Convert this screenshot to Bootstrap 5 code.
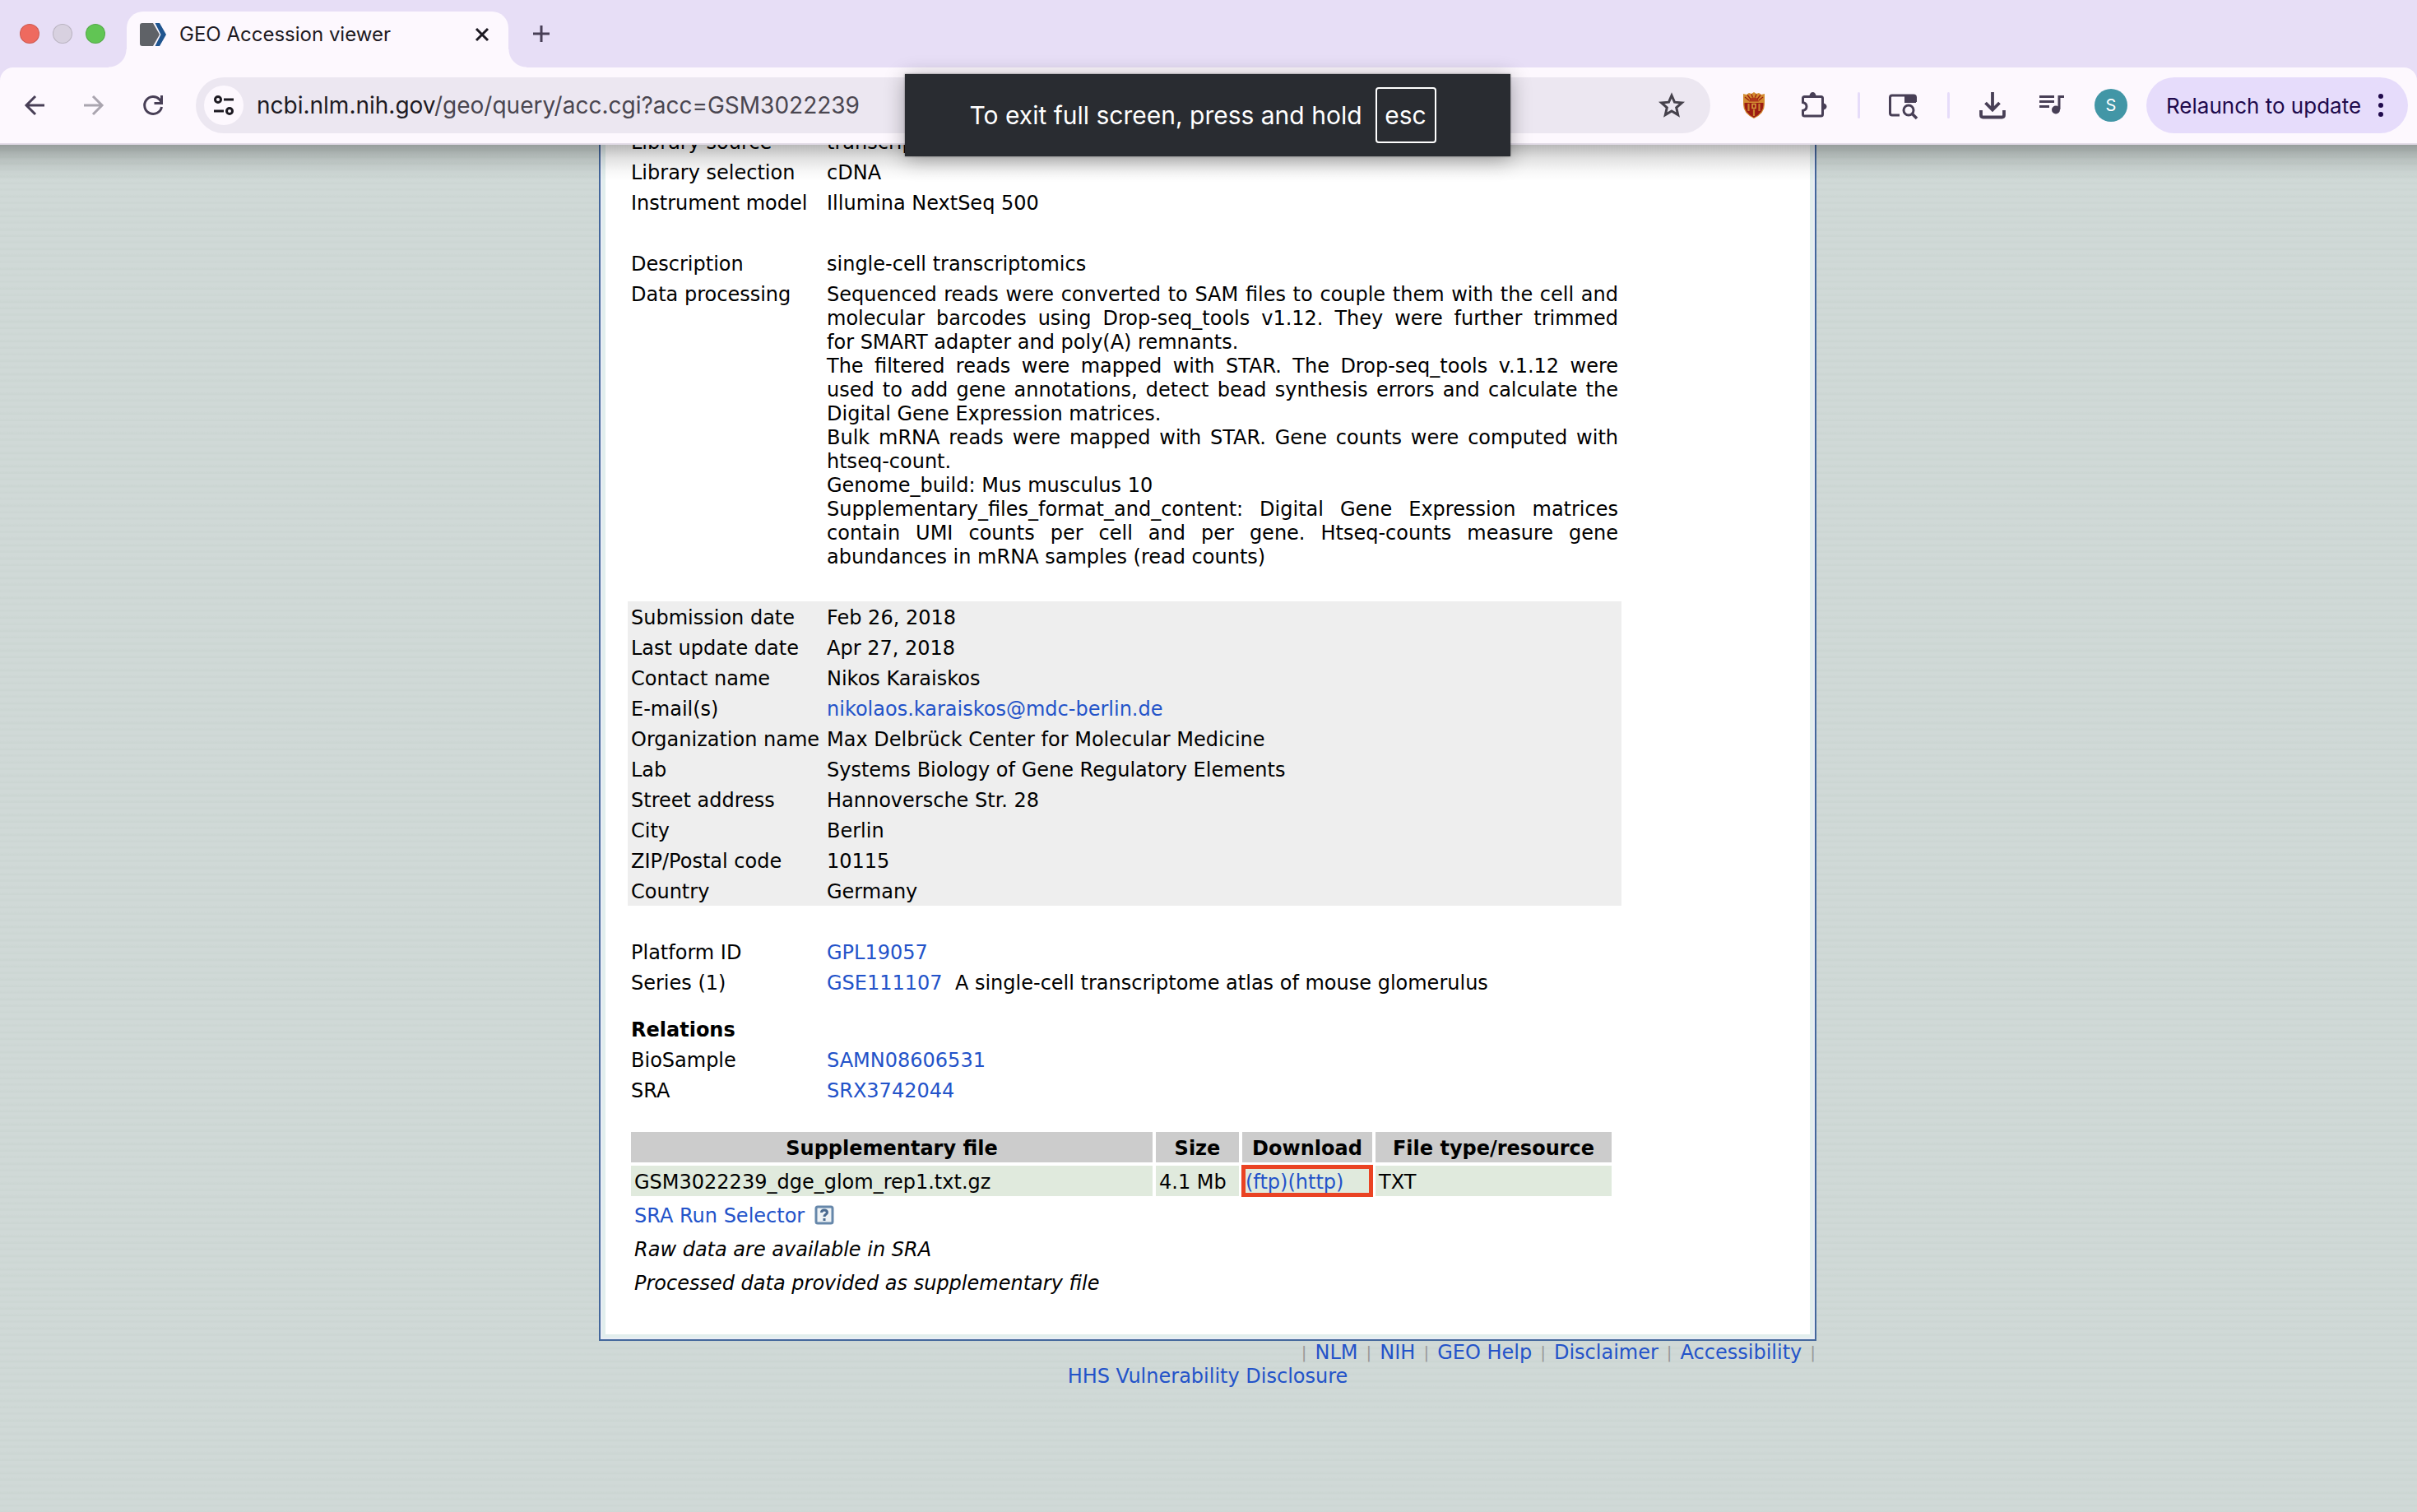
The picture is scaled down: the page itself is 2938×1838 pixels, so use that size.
<!DOCTYPE html>
<html lang="en">
<head>
<meta charset="utf-8">
<meta name="viewport" content="width=device-width, initial-scale=1">
<title>GEO Accession viewer</title>
<link href="https://cdn.jsdelivr.net/npm/bootstrap@5.3.0/dist/css/bootstrap.min.css" rel="stylesheet">
<style>
  body { font-family: "DejaVu Sans", Verdana, sans-serif; font-size: 24px; line-height: 29px; color: #000;
    background: repeating-linear-gradient(#d0d9d7 0 4px, #ccd6d3 7px 8px); }
  a { color: #2353c9; text-decoration: none; }
  svg { display: block; flex: none; }
  .chrome-ui { font-family: Inter, Roboto, sans-serif; background: #e7def6; color: #1d1a22; }
  .chrome-ui button, .notice { font-family: inherit; }
  .plain-btn { border: 0; background: none; padding: 0; color: #483f56; display: flex; align-items: center; justify-content: center; }
  .tool-btn { width: 40px; height: 40px; flex: none; }
  .tabstrip { height: 82px; padding-left: 24px; }
  .lights { gap: 16px; }
  .light { width: 24px; height: 24px; border-radius: 50%; border: 1px solid rgba(0,0,0,.14); }
  .light-close { background: #ee6a5f; }
  .light-min { background: #d8d1e0; }
  .light-max { background: #61c554; }
  .tab-item { width: 464px; height: 68px; margin-left: 26px; padding: 0 20px 12px 16px; background: #fdf8fe; border-radius: 20px 20px 0 0; position: relative; font-size: 24px; line-height: 28px; }
  .tab-item::before, .tab-item::after { content: ""; position: absolute; bottom: 0; width: 22px; height: 22px; }
  .tab-item::before { right: 100%; background: radial-gradient(circle at 0 0, transparent 21px, #fdf8fe 22px); }
  .tab-item::after { left: 100%; background: radial-gradient(circle at 100% 0, transparent 21px, #fdf8fe 22px); }
  .toolbar { height: 94px; padding: 0 11px 0 22px; background: #fdf8fe; border-bottom: 2px solid #e3dce8; border-radius: 16px 16px 0 0; }
  .nav-group { gap: 32px; }
  .omnibox { height: 68px; margin-left: 32px; padding: 0 28px 0 10px; border-radius: 34px; background: #ece7f1; }
  .chip { width: 48px; height: 48px; border-radius: 50%; background: #fdf8fe; }
  .url { margin-left: 16px; font-size: 28px; line-height: 36px; }
  .url-path { color: #4a4650; }
  .ext-group { gap: 33px; margin: 0 23px 0 33px; }
  .end-group { gap: 30px; }
  .bar-sep { width: 3px; height: 32px; border-radius: 2px; background: #e6dcfa; }
  .avatar { width: 40px; height: 40px; border-radius: 50%; background: #4296a6; color: #fff; font-size: 20px; }
  .relaunch { width: 318px; height: 68px; border-radius: 34px; background: #e6dcfb; color: #200a4c; font-size: 26px; padding: 0 28px 0 24px; flex: none; justify-content: space-between; }
  .notice { position: absolute; z-index: 5; top: 90px; left: 50%; margin-left: -369px; width: 736px; height: 100px; background: #292c31; color: #fff; font-size: 30px; line-height: 36px; gap: 16px; padding-right: 12px; box-shadow: 0 4px 24px rgba(0,0,0,.32), 0 0 2px rgba(0,0,0,.5); }
  .esc-key { font: inherit; color: #fff; background: none; border: 2px solid #fff; border-radius: 4px; width: 74px; height: 68px; padding: 0; display: flex; align-items: center; justify-content: center; }
  .viewport-area { position: relative; overflow: hidden; padding-right: 2px; }
  .viewport-area::before { content: ""; position: absolute; z-index: 2; top: 0; left: 0; right: 0; height: 44px; background: linear-gradient(rgba(0,0,0,.28), rgba(0,0,0,.12) 16px, rgba(0,0,0,.03) 32px, transparent); pointer-events: none; }
  .geo-frame { width: 1480px; max-width: 100%; margin: -23px auto 0; background: #fff; border: 2px solid #44679c; border-top: 0; box-shadow: inset 0 0 0 2px #e9edf5, inset 0 0 0 6px #e2eeed; padding: 0 6px 47px 33px; }
  .meta { width: 1208px; max-width: 100%; table-layout: fixed; border-collapse: collapse; }
  .meta th, .meta td { padding: 6px 4px 2px; height: 37px; vertical-align: top; text-align: left; font-weight: 400; }
  .meta th { width: 238px; white-space: nowrap; }
  .meta .just { text-align: justify; }
  .meta .grey { background: #eee; }
  .meta .half td { height: 20px; padding: 0; }
  .files { width: 1200px; max-width: 100%; margin: 29px 0 0 0; border-collapse: separate; border-spacing: 4px; table-layout: fixed; }
  .files th, .files td { padding: 6px 4px 2px; height: 37px; white-space: nowrap; }
  .files th { background: #ccc; text-align: center; }
  .files .data td { background: #e0eadd; }
  .files .mark-cell { box-shadow: inset 0 0 0 4px #ea4323, 0 0 0 1px #ea4323; }
  .c1 { width: 634px; } .c2 { width: 101px; } .c3 { width: 158px; }
  .help-link { margin: 0 0 4px 12px; }
  .foot { width: 1480px; max-width: 100%; margin: 0 auto; padding-right: 1px; }
  .foot-sep { font-size: 20px; color: #999; margin: 0 10px; }
  .foot-sep:last-child { margin-right: 0; }
</style>
<script src="https://cdn.jsdelivr.net/npm/bootstrap@5.3.0/dist/js/bootstrap.bundle.min.js"></script>
</head>
<body>
<header class="chrome-ui">
  <div class="tabstrip d-flex align-items-end">
    <div class="lights d-flex align-self-center">
      <span class="light light-close"></span><span class="light light-min"></span><span class="light light-max"></span>
    </div>
    <div class="tab-item d-flex align-items-center">
      <svg width="32" height="28" viewBox="0 0 32 28"><path d="M3 0h13l8 14-8 14H3a3 3 0 0 1-3-3V3a3 3 0 0 1 3-3z" fill="#5f6267"/><path d="M18.500 0H24l8 14-8 14h-5.500l7-14z" fill="#20558f"/></svg>
      <span class="ms-3">GEO Accession viewer</span>
      <button class="plain-btn ms-auto" aria-label="Close tab"><svg width="24" height="24" viewBox="0 0 24 24" stroke="#1d1a22" stroke-width="3"><path d="M5 5l14 14M19 5L5 19"/></svg></button>
    </div>
    <button class="plain-btn align-self-center ms-4" aria-label="New tab"><svg width="32" height="32" viewBox="0 0 32 32" stroke="#483f56" stroke-width="3"><path d="M16 6v20M6 16h20"/></svg></button>
  </div>
  <div class="toolbar d-flex align-items-center">
    <nav class="nav-group d-flex">
      <button class="plain-btn tool-btn" aria-label="Back"><svg width="40" height="40" viewBox="0 0 40 40" fill="none" stroke="#483f56" stroke-width="3"><path d="M32 20H10M21 9L10 20l11 11"/></svg></button>
      <button class="plain-btn tool-btn" aria-label="Forward"><svg width="40" height="40" viewBox="0 0 40 40" fill="none" stroke="#aaa5af" stroke-width="3"><path d="M8 20h22M19 9l11 11-11 11"/></svg></button>
      <button class="plain-btn tool-btn" aria-label="Reload"><svg width="40" height="40" viewBox="0 0 40 40" fill="none" stroke="#483f56" stroke-width="3"><path d="M30.500 22A10.500 10.500 0 1 1 28 13l2 3"/><path d="M30.500 8v9.500h-9"/></svg></button>
    </nav>
    <div class="omnibox d-flex align-items-center flex-grow-1">
      <button class="plain-btn chip" aria-label="Site information"><svg width="26" height="26" viewBox="0 0 26 26" fill="none" stroke="#1d1a22" stroke-width="3"><circle cx="6" cy="6" r="3.500"/><path d="M13 6h12M1 20h12"/><circle cx="20" cy="20" r="3.500"/></svg></button>
      <span class="url">ncbi.nlm.nih.gov<span class="url-path">/geo/query/acc.cgi?acc=GSM3022239</span></span>
      <button class="plain-btn tool-btn ms-auto" aria-label="Bookmark"><svg width="40" height="40" viewBox="0 0 40 40" fill="none" stroke="#46424c" stroke-width="3"><path d="M21 8l3.500 8.200 8.900.8-6.700 5.900 2 8.700-7.700-4.600-7.700 4.600 2-8.700L8.600 17l8.900-.8z"/></svg></button>
    </div>
    <div class="ext-group d-flex align-items-center">
      <button class="plain-btn tool-btn" aria-label="Shield extension"><svg width="40" height="40" viewBox="0 0 40 40"><path d="M7 6l4 1 3-2 3 1 3-2 3 2 3-1 3 2 4-1v13q0 11-13 17Q7 30 7 19z" fill="#d28b30"/><path d="M8.500 17h23v3q0 9-11.500 15Q8.500 29 8.500 20z" fill="#9c1c14"/><path d="M14 15.500q1-5 6-5t6 5z" fill="#b0381c"/><path d="M9 10l5 4M12 7.500l4 5M17 6.500l1.500 4M23 6.500l-1.500 4M28 7.500l-4 5M31 10l-5 4" stroke="#9c1c14" stroke-width="1.300"/><path d="M13.500 18v9M26.500 18v9M20 25v8" stroke="#c9802e" stroke-width="2.200"/><path d="M18 18.500h4v5h-4z" stroke="#d9a03c" stroke-width="1.500" fill="none"/></svg></button>
      <button class="plain-btn tool-btn" aria-label="Extensions"><svg width="40" height="40" viewBox="0 0 40 40"><path d="M8.500 9.500h20q2 0 2 2V31q0 2-2 2h-20q-2 0-2-2v-4.500c6-1.500 6-8.500 0-10v-5q0-2 2-2z" fill="none" stroke="#483f56" stroke-width="3"/><path d="M14.500 9a4 5 0 0 1 8 0zM31 17.500a4.500 4 0 0 1 0 8z" fill="#483f56"/></svg></button>
      <span class="bar-sep"></span>
      <button class="plain-btn tool-btn" aria-label="Search this page"><svg width="40" height="40" viewBox="0 0 40 40"><path d="M15 32H6q-2.500 0-2.500-2.500v-19Q3.500 8 6 8h26q2.500 0 2.500 2.500V16" fill="none" stroke="#483f56" stroke-width="3"/><path d="M21 8h14v9H21z" fill="#483f56"/><circle cx="26" cy="26" r="6" fill="#fdf8fe" stroke="#483f56" stroke-width="3"/><path d="M30 30l6 6" stroke="#483f56" stroke-width="3.500"/></svg></button>
      <span class="bar-sep"></span>
      <button class="plain-btn tool-btn" aria-label="Downloads"><svg width="40" height="40" viewBox="0 0 40 40" fill="none" stroke="#483f56" stroke-width="3.800"><path d="M19 4v21M10.500 17l8.500 8.500 8.500-8.500M5 26v6q0 2.500 2.500 2.500h23q2.500 0 2.500-2.500v-6"/></svg></button>
      <div class="end-group d-flex">
        <button class="plain-btn tool-btn" aria-label="Media controls"><svg width="40" height="40" viewBox="0 0 40 40" stroke="#483f56" stroke-width="3" fill="none"><path d="M3 9.500h18M3 15.500h18M3 21.500h12M27 25V9.500h6"/><circle cx="23" cy="25.500" r="4" fill="#483f56" stroke-width="2"/></svg></button>
        <button class="plain-btn avatar" aria-label="Profile">S</button>
      </div>
    </div>
    <button class="plain-btn relaunch">Relaunch to update
      <svg width="10" height="32" viewBox="0 0 10 32" fill="#200a4c"><circle cx="5" cy="5" r="3"/><circle cx="5" cy="16" r="3"/><circle cx="5" cy="27" r="3"/></svg></button>
  </div>
  <div class="notice d-flex align-items-center justify-content-center" role="status">
    <span>To exit full screen, press and hold</span><kbd class="esc-key">esc</kbd>
  </div>
</header>

<main class="viewport-area">
  <div class="geo-frame">
    <table class="meta">
      <tr><th>Library source</th><td>transcriptomic</td></tr>
      <tr><th>Library selection</th><td>cDNA</td></tr>
      <tr><th>Instrument model</th><td>Illumina NextSeq 500</td></tr>
      <tr><td colspan="2"></td></tr>
      <tr><th>Description</th><td>single-cell transcriptomics</td></tr>
      <tr><th>Data processing</th><td class="just">Sequenced reads were converted to SAM files to couple them with the cell and molecular barcodes using Drop-seq_tools v1.12. They were further trimmed for&nbsp;SMART adapter and poly(A) remnants.<br>The filtered reads were mapped with STAR. The Drop-seq_tools v.1.12 were used to add gene annotations, detect bead synthesis errors and calculate the Digital Gene Expression matrices.<br>Bulk mRNA reads were mapped with STAR. Gene counts were computed with htseq-count.<br>Genome_build: Mus musculus 10<br>Supplementary_files_format_and_content: Digital Gene Expression matrices contain UMI counts per cell and per gene. Htseq-counts measure gene abundances in mRNA samples (read counts)</td></tr>
      <tr><td colspan="2"></td></tr>
      <tr class="grey"><th>Submission date</th><td>Feb 26, 2018</td></tr>
      <tr class="grey"><th>Last update date</th><td>Apr 27, 2018</td></tr>
      <tr class="grey"><th>Contact name</th><td>Nikos Karaiskos</td></tr>
      <tr class="grey"><th>E-mail(s)</th><td><a href="#">nikolaos.karaiskos@mdc-berlin.de</a></td></tr>
      <tr class="grey"><th>Organization name</th><td>Max Delbrück Center for Molecular Medicine</td></tr>
      <tr class="grey"><th>Lab</th><td>Systems Biology of Gene Regulatory Elements</td></tr>
      <tr class="grey"><th>Street address</th><td>Hannoversche Str. 28</td></tr>
      <tr class="grey"><th>City</th><td>Berlin</td></tr>
      <tr class="grey"><th>ZIP/Postal code</th><td>10115</td></tr>
      <tr class="grey"><th>Country</th><td>Germany</td></tr>
      <tr><td colspan="2"></td></tr>
      <tr><th>Platform ID</th><td><a href="#">GPL19057</a></td></tr>
      <tr><th>Series (1)</th><td><a href="#">GSE111107</a>&nbsp; A single-cell transcriptome atlas of mouse glomerulus</td></tr>
      <tr class="half"><td colspan="2"></td></tr>
      <tr><th><b>Relations</b></th><td></td></tr>
      <tr><th>BioSample</th><td><a href="#">SAMN08606531</a></td></tr>
      <tr><th>SRA</th><td><a href="#">SRX3742044</a></td></tr>
    </table>
    <table class="files">
      <tr><th class="c1">Supplementary file</th><th class="c2">Size</th><th class="c3">Download</th><th>File type/resource</th></tr>
      <tr class="data"><td>GSM3022239_dge_glom_rep1.txt.gz</td><td>4.1 Mb</td><td class="mark-cell"><a href="#">(ftp)</a><a href="#">(http)</a></td><td>TXT</td></tr>
      <tr><td colspan="4"><div class="d-flex align-items-center"><a href="#">SRA Run Selector</a>
        <a href="#" class="help-link" aria-label="Help"><svg width="24" height="24" viewBox="0 0 24 24"><rect x="2" y="2" width="20" height="20" rx="2" fill="#eef3f6" stroke="#6687aa" stroke-width="3"/><path d="M8.500 9q0-3 3.500-3t3.500 3c0 2-3.500 2-3.500 5M12 16v3" fill="none" stroke="#4a6a90" stroke-width="3"/></svg></a></div></td></tr>
      <tr><td colspan="4"><i>Raw data are available in SRA</i></td></tr>
      <tr><td colspan="4"><i>Processed data provided as supplementary file</i></td></tr>
    </table>
  </div>
  <footer>
    <div class="foot d-flex justify-content-end">
      <span class="foot-sep">|</span><a href="#">NLM</a><span class="foot-sep">|</span><a href="#">NIH</a><span class="foot-sep">|</span><a href="#">GEO Help</a><span class="foot-sep">|</span><a href="#">Disclaimer</a><span class="foot-sep">|</span><a href="#">Accessibility</a><span class="foot-sep">|</span>
    </div>
    <div class="text-center"><a href="#">HHS Vulnerability Disclosure</a></div>
  </footer>
</main>
</body>
</html>
